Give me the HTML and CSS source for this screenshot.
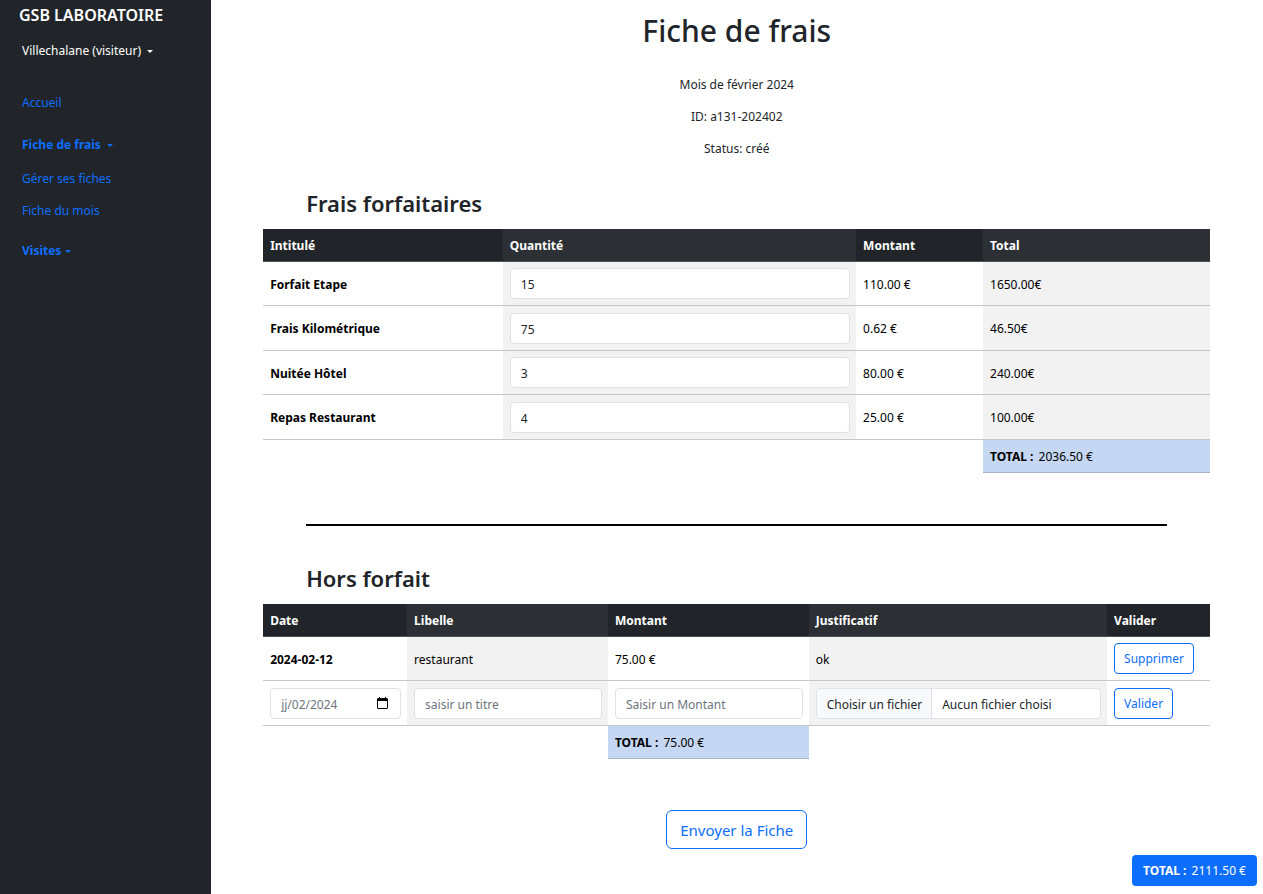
FILE: index.html
```html
<!DOCTYPE html>
<html lang="fr">
<head>
<meta charset="utf-8">
<meta name="viewport" content="width=device-width, initial-scale=1">
<title>GSB Laboratoire - Fiche de frais</title>
<link rel="stylesheet" href="styles.css">
</head>
<body>
<div class="layout">
  <aside class="sidebar">
    <a class="brand" href="#">GSB LABORATOIRE</a>
    <button class="menu-toggle user" type="button">Villechalane (visiteur) <span class="caret"></span></button>
    <nav class="menu">
      <a class="menu-link" href="#">Accueil</a>
      <div class="menu-group">
        <button class="menu-toggle section" type="button">Fiche de frais <span class="caret"></span></button>
        <div class="submenu">
          <a class="menu-link" href="#">Gérer ses fiches</a>
          <a class="menu-link" href="#">Fiche du mois</a>
        </div>
      </div>
      <button class="menu-toggle section tight" type="button">Visites <span class="caret"></span></button>
    </nav>
  </aside>

  <main class="content">
    <header class="intro">
      <h1>Fiche de frais</h1>
      <p>Mois de février 2024</p>
      <p>ID: a131-202402</p>
      <p>Status: créé</p>
    </header>

    <section>
      <h2>Frais forfaitaires</h2>
      <table class="fees">
        <colgroup><col class="w-title"><col class="w-quantity"><col class="w-amount"><col class="w-total"></colgroup>
        <thead>
          <tr><th scope="col">Intitulé</th><th scope="col">Quantité</th><th scope="col">Montant</th><th scope="col">Total</th></tr>
        </thead>
        <tbody>
          <tr><th scope="row"><label for="q1">Forfait Etape</label></th><td class="control"><input class="field" id="q1" type="text" value="15"></td><td>110.00 €</td><td>1650.00€</td></tr>
          <tr><th scope="row"><label for="q2">Frais Kilométrique</label></th><td class="control"><input class="field" id="q2" type="text" value="75"></td><td>0.62 €</td><td>46.50€</td></tr>
          <tr><th scope="row"><label for="q3">Nuitée Hôtel</label></th><td class="control"><input class="field" id="q3" type="text" value="3"></td><td>80.00 €</td><td>240.00€</td></tr>
          <tr><th scope="row"><label for="q4">Repas Restaurant</label></th><td class="control"><input class="field" id="q4" type="text" value="4"></td><td>25.00 €</td><td>100.00€</td></tr>
        </tbody>
        <tfoot>
          <tr><td colspan="3"></td><td class="sum"><strong>TOTAL :</strong> 2036.50 €</td></tr>
        </tfoot>
      </table>
    </section>

    <hr class="divider">

    <section>
      <h2>Hors forfait</h2>
      <table class="fees">
        <colgroup><col class="w-date"><col class="w-label"><col class="w-label"><col class="w-proof"><col class="w-action"></colgroup>
        <thead>
          <tr><th scope="col">Date</th><th scope="col">Libelle</th><th scope="col">Montant</th><th scope="col">Justificatif</th><th scope="col">Valider</th></tr>
        </thead>
        <tbody>
          <tr><th scope="row">2024-02-12</th><td>restaurant</td><td>75.00 €</td><td>ok</td><td class="control"><button class="btn" type="button">Supprimer</button></td></tr>
          <tr>
            <td class="control">
              <div class="field date-field">
                <input type="text" value="jj/02/2024" aria-label="Date">
                <button type="button" aria-label="Calendrier">
                  <svg width="11" height="12" viewBox="0 0 11 12"><path fill="#000" fill-rule="evenodd" d="M2 0h1v1h5V0h1v1h1l1 1v9l-1 1H1l-1-1V2l1-1h1zM1 4v7h9V4z"/></svg>
                </button>
              </div>
            </td>
            <td class="control"><input class="field" type="text" placeholder="saisir un titre" aria-label="Libelle"></td>
            <td class="control"><input class="field" type="text" placeholder="Saisir un Montant" aria-label="Montant"></td>
            <td class="control">
              <label class="field file-field"><input class="file-input" type="file"><span class="file-button">Choisir un fichier</span><span class="file-name">Aucun fichier choisi</span></label>
            </td>
            <td class="control"><button class="btn" type="button">Valider</button></td>
          </tr>
        </tbody>
        <tfoot>
          <tr><td colspan="2"></td><td class="sum"><strong>TOTAL :</strong> 75.00 €</td><td colspan="2"></td></tr>
        </tfoot>
      </table>
    </section>

    <button class="btn btn-large" type="submit">Envoyer la Fiche</button>
  </main>
</div>
<div class="grand-total"><strong>TOTAL :</strong> 2111.50 €</div>
</body>
</html>
```
FILE: styles.css
```css
* { box-sizing: border-box; }
body {
  margin: 0;
  background: #fff;
  color: #212529;
  font: 12px/20px "Noto Sans", "Open Sans", sans-serif;
}
button, input { font: inherit; color: inherit; }
button { cursor: pointer; }
a { text-decoration: none; }
strong { margin-right: 2px; }

.layout { display: grid; grid-template-columns: 1fr 5fr; min-height: 100vh; }

.sidebar {
  display: flex;
  flex-direction: column;
  align-items: flex-start;
  padding: 5px 22px;
  background: #212529;
}
.brand { margin: 0 -3px 16px; color: #fff; font-size: 16px; font-weight: 600; white-space: nowrap; }
.menu-toggle {
  display: flex;
  align-items: center;
  gap: 6px;
  padding: 0;
  border: 0;
  background: none;
  white-space: nowrap;
}
.user { color: #fff; }
.section { color: #0d6efd; font-weight: 700; }
.tight { gap: 4px; }
.caret { border: 3px solid transparent; border-top-color: currentColor; border-bottom: 0; }
.menu { display: flex; flex-direction: column; align-items: flex-start; gap: 20px; margin-top: 32px; }
.menu-group { margin-top: 2px; }
.menu-link { display: block; color: #0d6efd; }
.submenu { display: flex; flex-direction: column; gap: 12px; margin-top: 14px; }

.content { padding: 10px 5% 45px; text-align: center; }
.intro p { margin: 0 0 12px; }
h1 { margin: 0 0 23px; font-size: 30px; line-height: 42px; font-weight: 500; }
h2 {
  margin: 30px 43px 12px;
  font-size: 22px;
  line-height: 28px;
  font-weight: 600;
  text-align: left;
}
.divider { height: 2px; margin: 51px 43px 38px; border: 0; background: #000; }
.divider + section h2 { margin-top: 0; }

.fees {
  width: 100%;
  table-layout: fixed;
  border-spacing: 0;
  color: #000;
  text-align: left;
}
.w-title { width: 25.3%; }
.w-quantity { width: 37.3%; }
.w-amount { width: 13.4%; }
.w-total { width: 24%; }
.w-date { width: 15.2%; }
.w-label { width: 21.2%; }
.w-proof { width: 31.5%; }
.w-action { width: 10.9%; }
.fees th, .fees td { padding: 7px 6px 5px 7px; border-bottom: 1px solid #c6c7c8; vertical-align: middle; }
.fees .control { padding: 6px; padding-left: 7px; }
.fees tbody tr:nth-child(even) .control { padding-top: 7px; }
.fees thead th { background: #212529; border-color: #4d5154; color: #fff; }
.fees thead th:nth-child(even) { background: #2c3034; }
.fees tbody td:nth-child(even) { background: #f2f2f2; }
.fees tfoot td { border-bottom: 0; }
.fees tfoot .sum { background: #c5d7f2; border-bottom: 1px solid #a6b5cc; }

.field {
  display: flex;
  align-items: center;
  width: 100%;
  height: 31px;
  padding: 2px 10px 0;
  border: 1px solid #dee2e6;
  border-radius: 4px;
  background: #fff;
  color: #212529;
}
.field::placeholder { color: #6c757d; opacity: 1; }
.date-field { padding-right: 12px; color: #6c757d; }
.date-field input { flex: 1; min-width: 0; padding: 0; border: 0; background: none; }
.date-field button { display: flex; padding: 0 0 3px; border: 0; background: none; }
.file-field { position: relative; padding: 0; overflow: hidden; }
.file-input { position: absolute; inset: 0; opacity: 0; }
.file-button, .file-name { padding: 6px 9px 3px 10px; }
.file-button { border-right: 1px solid #dee2e6; background: #f8f9fa; }

.btn {
  display: block;
  height: 31px;
  padding: 1px 9px 0;
  border: 1px solid #0d6efd;
  border-radius: 4px;
  background: #fff;
  color: #0d6efd;
}
.btn-large { height: 39px; margin: 51px auto 0; padding: 0 13px; border-radius: 6px; font-size: 15px; }

.grand-total {
  position: fixed;
  right: 6px;
  bottom: 8px;
  padding: 6px 11px 5px;
  border-radius: 4px;
  background: #0d6efd;
  color: #fff;
}
```
